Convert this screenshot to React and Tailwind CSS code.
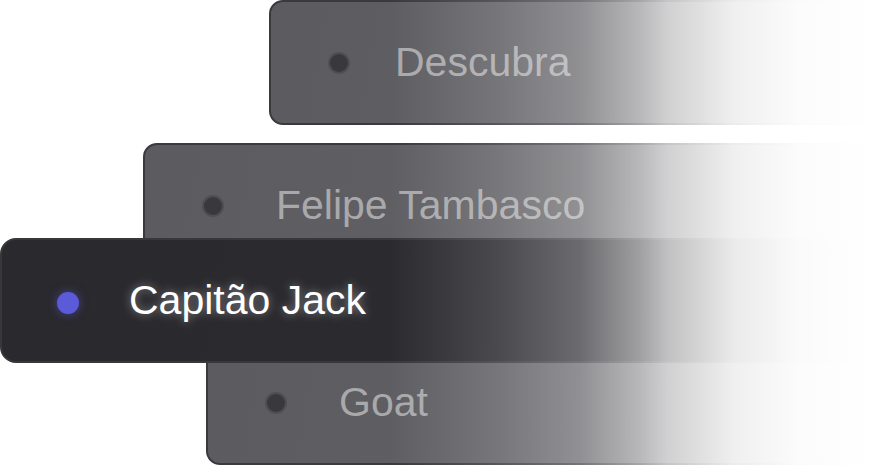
import React from "react";

const items = [
  { label: "Descubra", offset: "ml-[269px] mt-0", gap: "gap-[47px]" },
  { label: "Felipe Tambasco", offset: "ml-[143px] mt-[18px]", gap: "gap-[54px]" },
  { label: "Capitão Jack", offset: "ml-0 -mt-[30px]", active: true },
  { label: "Goat", offset: "ml-[206px] -mt-[23px]", gap: "gap-[54px]" },
];

const Card = ({ label, offset, gap, active }) => {
  if (active) {
    return (
      <div
        className={`relative z-20 ${offset} flex items-center gap-[50px] h-[125px] w-[960px] shrink-0 pl-[55px] rounded-[16px] border-2 border-[#38373c] bg-[linear-gradient(100deg,#2a292e_0%,#2d2c31_100%)]`}
      >
        <span className="block w-[22px] h-[22px] mt-[4px] rounded-full bg-[#5b5bd9] shadow-[0_0_10px_rgba(91,91,217,0.55)]" />
        <span className="text-[41px] leading-none text-white [text-shadow:0_0_10px_rgba(255,255,255,0.45)]">
          {label}
        </span>
      </div>
    );
  }

  return (
    <div
      className={`relative z-10 ${offset} flex items-center ${gap} h-[125px] w-[960px] shrink-0 pl-[59px] rounded-[14px] border-2 border-[#3a393e] bg-[linear-gradient(100deg,#5c5b60_0%,#68676b_100%)]`}
    >
      <span className="block w-[18px] h-[18px] rounded-full bg-[#39383d] shadow-[0_0_0_2px_rgba(78,77,83,0.9)]" />
      <span className="text-[41px] leading-none text-[#a9a9ab]">{label}</span>
    </div>
  );
};

export default function App() {
  return (
    <div className="relative w-[874px] h-[465px] overflow-hidden bg-white font-['Liberation_Sans',Arial,sans-serif]">
      <div className="flex flex-col">
        {items.map((item) => (
          <Card key={item.label} {...item} />
        ))}
      </div>

      {/* fade to white on the right */}
      <div className="pointer-events-none absolute inset-0 z-30 bg-[linear-gradient(to_right,rgba(255,255,255,0)_44.6%,rgba(255,255,255,0.08)_51.5%,rgba(255,255,255,0.15)_57.2%,rgba(255,255,255,0.3)_66.4%,rgba(255,255,255,0.55)_73.2%,rgba(255,255,255,0.7)_76.3%,rgba(255,255,255,0.9)_83.9%,rgba(255,255,255,0.98)_91.5%,#fff_100%)]" />
    </div>
  );
}
